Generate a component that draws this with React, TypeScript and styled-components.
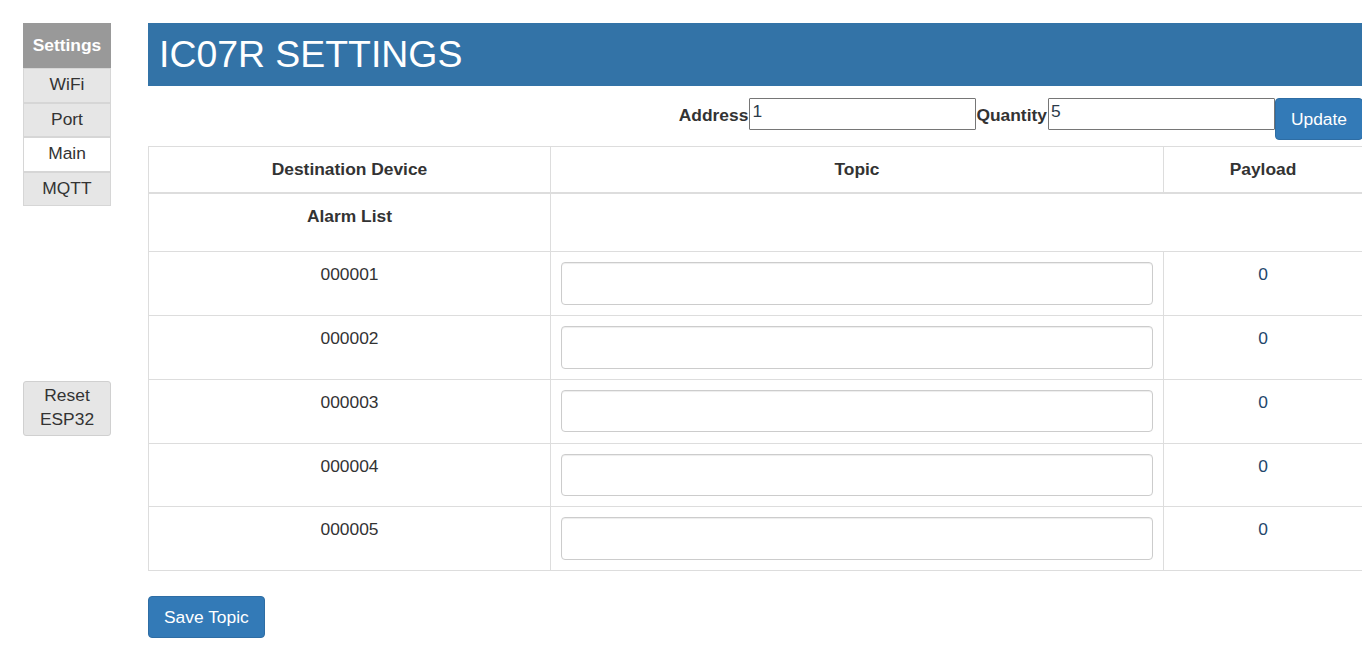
import React from "react";
import styled, { createGlobalStyle } from "styled-components";

const Global = createGlobalStyle`
  html, body { margin: 0; padding: 0; overflow: hidden; background: #fff; }
  body { font-family: "Liberation Sans", Arial, sans-serif; font-size: 17.4px; color: #333; line-height: 1.42857; }
  * { box-sizing: border-box; }
`;

const Page = styled.div`
  display: flex;
  align-items: flex-start;
  padding: 23px 0 0 23px;
  gap: 37px;
  width: 1400px;
`;

const Sidebar = styled.nav`
  width: 88px;
  flex: none;
  display: flex;
  flex-direction: column;
`;

const SideHead = styled.div`
  height: 45px;
  background: #999;
  color: #fff;
  font-weight: bold;
  display: flex;
  align-items: center;
  justify-content: center;
`;

const SideItem = styled.div<{ $active?: boolean }>`
  height: 34.5px;
  background: ${(p) => (p.$active ? "#fff" : "#e6e6e6")};
  border: 1px solid #d6d6d6;
  border-top-width: 0;
  color: #333;
  display: flex;
  align-items: center;
  justify-content: center;
  box-shadow: inset 0 1px 0 #d6d6d6;
`;

const ResetButton = styled.button`
  margin-top: 175px;
  height: 55px;
  width: 88px;
  background: #e6e6e6;
  border: 1px solid #d0d0d0;
  border-radius: 3px;
  font-family: inherit;
  font-size: 17.4px;
  line-height: 24px;
  color: #333;
  padding: 0 0 3px;
`;

const Main = styled.main`
  width: 1215px;
  flex: none;
  display: flex;
  flex-direction: column;
`;

const Banner = styled.h1`
  margin: 0;
  height: 63px;
  background: #3373a7;
  color: #fff;
  font-weight: normal;
  font-size: 37.4px;
  line-height: 63px;
  padding-left: 11px;
`;

const Controls = styled.div`
  display: flex;
  justify-content: flex-end;
  align-items: flex-start;
  margin-top: 12px;
`;

const Label = styled.label`
  font-weight: bold;
  height: 32px;
  line-height: 34px;
`;

const NumInput = styled.input`
  width: 227px;
  height: 32px;
  border: 1px solid #767676;
  border-radius: 1px;
  padding: 0 2px 6px;
  font-family: inherit;
  font-size: 17.4px;
  color: #2b3a4a;
  margin: 0 0 0 1px;
  line-height: 24px;
`;

const PrimaryButton = styled.button`
  background: #337ab7;
  border: 1px solid #2e6da4;
  border-radius: 4px;
  color: #fff;
  font-family: inherit;
  font-size: 17.4px;
  line-height: 24px;
  padding: 8px 15px;
  height: 42px;
`;

const Table = styled.table`
  margin-top: 6px;
  width: 100%;
  border-collapse: collapse;
  border: 1px solid #ddd;
  table-layout: fixed;
`;

const Th = styled.th`
  border: 1px solid #ddd;
  border-bottom: 2px solid #ddd;
  padding: 10px 8px;
  height: 46px;
  font-weight: bold;
  text-align: center;
  vertical-align: middle;
`;

const Td = styled.td<{ $bold?: boolean; $pay?: boolean }>`
  border: 1px solid #ddd;
  padding: 10px 10px 10.4px;
  text-align: center;
  vertical-align: top;
  font-weight: ${(p) => (p.$bold ? "bold" : "normal")};
  color: ${(p) => (p.$pay ? "#23466b" : "#333")};
`;

const AlarmRow = styled.tr`
  height: 59px;
`;

const TopicInput = styled.input`
  display: block;
  width: 100%;
  height: 42.4px;
  border: 1px solid #ccc;
  border-radius: 4px;
  box-shadow: inset 0 1px 1px rgba(0, 0, 0, 0.075);
  font-family: inherit;
  font-size: 17px;
  padding: 6px 12px;
`;

const Footer = styled.div`
  margin-top: 25px;
`;

const rows = ["000001", "000002", "000003", "000004", "000005"];

export default function App() {
  return (
    <>
      <Global />
      <Page>
        <Sidebar>
          <SideHead>Settings</SideHead>
          <SideItem>WiFi</SideItem>
          <SideItem>Port</SideItem>
          <SideItem $active>Main</SideItem>
          <SideItem>MQTT</SideItem>
          <ResetButton>
            Reset
            <br />
            ESP32
          </ResetButton>
        </Sidebar>
        <Main>
          <Banner>IC07R SETTINGS</Banner>
          <Controls>
            <Label>Address</Label>
            <NumInput defaultValue="1" />
            <Label>Quantity</Label>
            <NumInput defaultValue="5" />
            <PrimaryButton>Update</PrimaryButton>
          </Controls>
          <Table>
            <colgroup>
              <col style={{ width: 402 }} />
              <col style={{ width: 613 }} />
              <col />
            </colgroup>
            <thead>
              <tr>
                <Th>Destination Device</Th>
                <Th>Topic</Th>
                <Th>Payload</Th>
              </tr>
            </thead>
            <tbody>
              <AlarmRow>
                <Td $bold>Alarm List</Td>
                <Td colSpan={2}></Td>
              </AlarmRow>
              {rows.map((r) => (
                <tr key={r}>
                  <Td>{r}</Td>
                  <Td>
                    <TopicInput />
                  </Td>
                  <Td $pay>0</Td>
                </tr>
              ))}
            </tbody>
          </Table>
          <Footer>
            <PrimaryButton>Save Topic</PrimaryButton>
          </Footer>
        </Main>
      </Page>
    </>
  );
}
